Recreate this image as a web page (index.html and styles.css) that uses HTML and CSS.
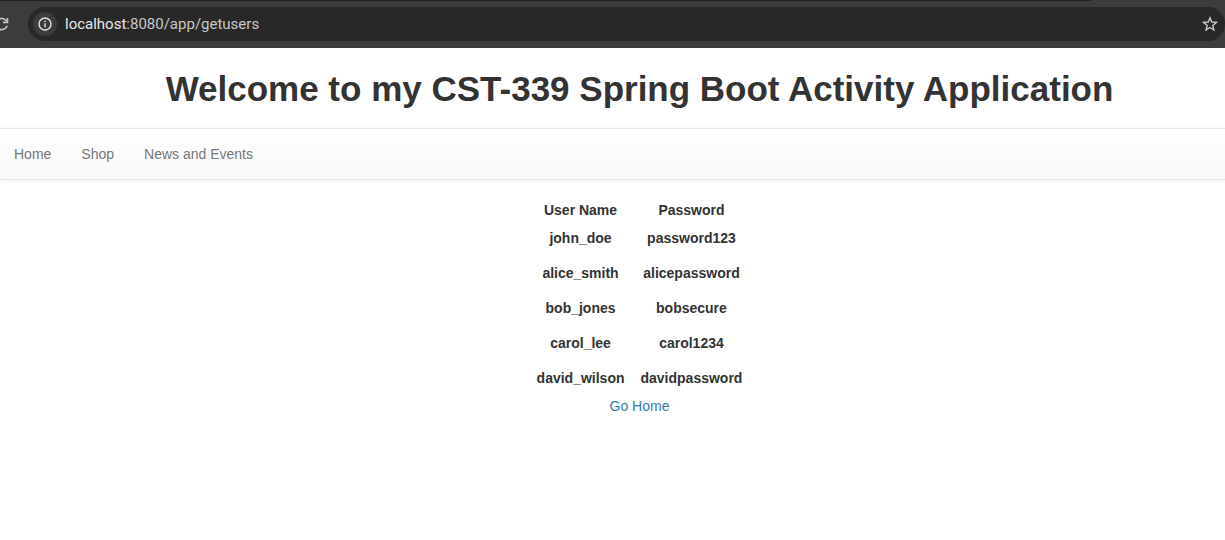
FILE: index.html
```html
<!DOCTYPE html>
<html lang="en">
<head>
<meta charset="utf-8">
<title>Users</title>
<link rel="stylesheet" href="styles.css">
</head>
<body>
<div class="browser-bar">
  <button class="reload" type="button" aria-label="Reload">
    <svg width="16" height="16" viewBox="0 0 16 16" fill="none" stroke="#c7c7c7" stroke-width="1.6"><path d="M13.2 9.8A5.6 5.6 0 1 1 12.6 5"/><path d="M13.5 2v4.4H9"/></svg>
  </button>
  <div class="address">
    <button class="site-info" type="button" aria-label="Site information">
      <svg width="14" height="14" viewBox="0 0 14 14" fill="none" stroke="#e3e3e3" stroke-width="1.4"><circle cx="7" cy="7" r="6"/><path d="M7 6.2v4M7 3.6v1.5"/></svg>
    </button>
    <div class="url"><span class="host">localhost</span>:8080/app/getusers</div>
    <button class="bookmark" type="button" aria-label="Bookmark">
      <svg width="16" height="16" viewBox="0 0 16 16" fill="none" stroke="#c7c7c7" stroke-width="1.4"><path d="M8 1.8l1.7 4.2 4.7.4-3.6 3 1.1 4.6L8 11.5 4.1 14l1.1-4.6-3.6-3 4.7-.4z"/></svg>
    </button>
  </div>
</div>
<header class="page-header"><h1>Welcome to my CST-339 Spring Boot Activity Application</h1></header>
<nav class="navbar">
  <a href="#">Home</a>
  <a href="#">Shop</a>
  <a href="#">News and Events</a>
</nav>
<main class="content">
  <table class="users">
    <thead><tr><th>User Name</th><th>Password</th></tr></thead>
    <tbody>
      <tr><td>john_doe</td><td>password123</td></tr>
      <tr><td>alice_smith</td><td>alicepassword</td></tr>
      <tr><td>bob_jones</td><td>bobsecure</td></tr>
      <tr><td>carol_lee</td><td>carol1234</td></tr>
      <tr><td>david_wilson</td><td>davidpassword</td></tr>
    </tbody>
  </table>
  <a class="home-link" href="#">Go Home</a>
</main>
</body>
</html>
```
FILE: styles.css
```css
* { box-sizing: border-box; }
body {
  margin: 0;
  background: #fff;
  color: #333;
  font: 14px/20px "Helvetica Neue", "Liberation Sans", Arial, sans-serif;
  overflow-x: hidden;
}
button { padding: 0; border: 0; background: none; display: flex; align-items: center; justify-content: center; }
a { text-decoration: none; }
.browser-bar {
  display: flex;
  align-items: center;
  height: 48px;
  background: linear-gradient(#202020, #202020) 0 0 / 1091px 1px no-repeat, #3c3c3c;
}
.reload { width: 28px; margin-left: -6px; justify-content: flex-start; }
.address {
  display: flex;
  align-items: center;
  flex: 1;
  height: 34px;
  margin-left: 6px;
  padding: 0 7px 0 5px;
  border-radius: 17px;
  background: #282828;
}
.site-info { width: 24px; height: 24px; border-radius: 12px; background: #3c3c3c; }
.url { flex: 1; margin-left: 8px; color: #c7c7c7; font: 15px/20px Roboto, sans-serif; }
.host { color: #e8e8e8; }
.page-header { padding: 21px 0 19px 54px; text-align: center; }
h1 {
  margin: 0;
  font-size: 35px;
  font-weight: 700;
  line-height: 40px;
}
.navbar {
  display: flex;
  gap: 30px;
  padding: 15px 14px;
  border: solid #e7e7e7;
  border-width: 1px 0;
  background: linear-gradient(#fff, #f8f8f8);
  box-shadow: 0 1px 5px rgba(0, 0, 0, .075);
}
.navbar a { color: #777; }
.content { display: flex; flex-direction: column; align-items: center; padding: 16px 0 20px 54px; }
.users { border-collapse: collapse; text-align: center; }
.users th { padding: 3px 8px 0; line-height: 22px; }
.users td { padding: 8px 8px 7px; font-weight: 700; }
.users tbody tr:first-child td { padding-top: 7px; }
.home-link { margin-top: 1px; color: #337ab7; }
```
